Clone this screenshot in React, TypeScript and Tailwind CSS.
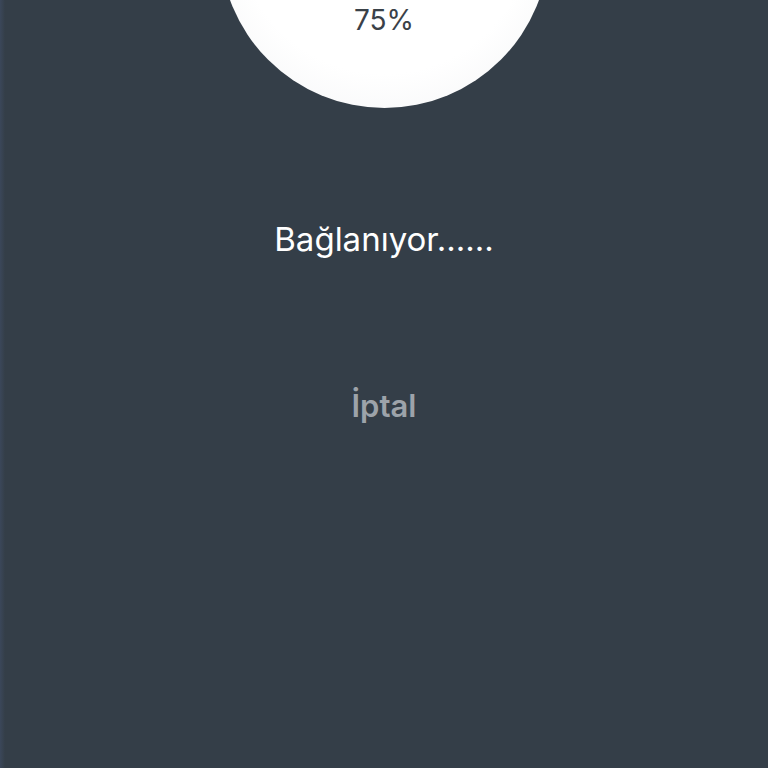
export default function App() {
  return (
    <div
      className="relative flex h-[768px] w-full flex-col items-center overflow-hidden bg-[#343e48] text-center"
      style={{ fontFamily: 'Inter, "Noto Sans", sans-serif' }}
    >
      <div className="absolute inset-y-0 left-0 w-[5px] bg-gradient-to-r from-[#3b475a] to-[#343e48]" />

      <div className="mt-[-221px] flex h-[329px] w-[329px] shrink-0 flex-col items-center justify-end rounded-full bg-[radial-gradient(circle_at_50%_45%,#ffffff_60%,#f1f2f4_100%)] pb-[70px]">
        <span className="text-[28px] leading-[36px] text-[#3a4148]">75%</span>
      </div>

      <p className="mt-[111px] text-[33px] leading-[40px] text-white">Bağlanıyor......</p>

      <button type="button" className="mt-[128px] text-[31px] font-semibold leading-[38px] text-[#9da3aa]">
        İptal
      </button>
    </div>
  )
}
